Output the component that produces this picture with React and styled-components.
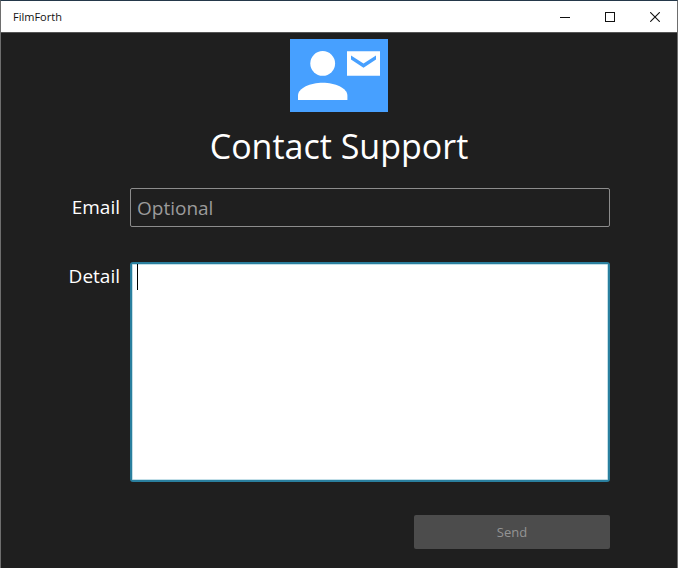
import React from "react";
import styled, { createGlobalStyle } from "styled-components";

const GlobalStyle = createGlobalStyle`
  *, *::before, *::after { box-sizing: border-box; }
  body {
    margin: 0;
    background: #1f1f1f;
    font-family: "Segoe UI", "Open Sans", "Noto Sans", sans-serif;
  }
`;

const Window = styled.div`
  display: flex;
  flex-direction: column;
  min-height: 100vh;
  border: 1px solid #6e6e6e;
  border-top-color: #24384a;
  border-bottom-width: 0;
  background: #1f1f1f;
  color: #fff;
`;

const TitleBar = styled.header`
  display: flex;
  align-items: center;
  justify-content: space-between;
  height: 32px;
  padding-left: 12px;
  border-bottom: 1px solid #555;
  background: #fff;
  color: #111;
`;

const AppName = styled.span`
  font-size: 11px;
  line-height: 16px;
`;

const WindowControls = styled.div`
  display: flex;
  align-self: stretch;
`;

const WindowButton = styled.button`
  display: flex;
  align-items: center;
  justify-content: center;
  width: 45px;
  padding: 0;
  border: 0;
  background: transparent;
  color: #111;
`;

const Form = styled.form`
  display: flex;
  flex: 1;
  flex-direction: column;
  padding: 6px 67px 19px 20px;
`;

const Heading = styled.div`
  display: flex;
  flex-direction: column;
  align-items: center;
  margin: 0 0 18px 47px;
`;

const SupportIcon = styled.svg`
  display: block;
  width: 98px;
  height: 73px;
`;

const Title = styled.h1`
  margin: 10px 0 0;
  font-size: 34px;
  font-weight: 400;
  line-height: 48px;
  white-space: nowrap;
`;

const Field = styled.div`
  display: grid;
  grid-template-columns: 99px minmax(0, 1fr);
  column-gap: 10px;
  flex: ${({ $grow }) => ($grow ? "1" : "none")};
  margin-bottom: ${({ $grow }) => ($grow ? "33px" : "35px")};
`;

const Label = styled.label`
  padding-top: ${({ $top }) => $top}px;
  font-size: 19px;
  font-weight: 500;
  line-height: 26px;
  text-align: right;
`;

const EmailInput = styled.input`
  width: 100%;
  height: 39px;
  padding: 0 6px;
  border: 1px solid #8c8c8c;
  border-radius: 2px;
  outline: none;
  background: transparent;
  color: #fff;
  font: inherit;
  font-size: 19px;

  &::placeholder {
    color: #9b9b9b;
    opacity: 1;
  }
`;

const DetailBox = styled.div`
  position: relative;
  display: flex;
`;

const DetailInput = styled.textarea`
  flex: 1;
  min-width: 0;
  min-height: 100px;
  padding: 0 5px;
  border: 2px solid #2a7f9e;
  border-radius: 3px;
  outline: none;
  resize: none;
  background: #fff;
  box-shadow: inset 0 0 0 1px #c3dfe8;
  color: #000;
  caret-color: ${({ $empty }) => ($empty ? "transparent" : "#000")};
  font: inherit;
  font-size: 19px;
  line-height: 26px;
`;

const Caret = styled.span`
  position: absolute;
  top: 2px;
  left: 7px;
  width: 1px;
  height: 26px;
  background: #000;
  pointer-events: none;
`;

const SendButton = styled.button`
  align-self: flex-end;
  width: 196px;
  max-width: 100%;
  height: 34px;
  padding: 0;
  border: 0;
  border-radius: 2px;
  background: #4c4c4c;
  color: #949494;
  font: inherit;
  font-size: 13px;
`;

export default function App() {
  const [detail, setDetail] = React.useState("");

  return (
    <>
      <GlobalStyle />
      <Window>
        <TitleBar>
          <AppName>FilmForth</AppName>
          <WindowControls>
            <WindowButton type="button" aria-label="Minimize">
              <svg width="10" height="10" viewBox="0 0 10 10" shapeRendering="crispEdges">
                <path d="M0 5.5H10" stroke="currentColor" />
              </svg>
            </WindowButton>
            <WindowButton type="button" aria-label="Maximize">
              <svg width="10" height="10" viewBox="0 0 10 10" shapeRendering="crispEdges">
                <path d="M.5.5h9v9h-9z" fill="none" stroke="currentColor" />
              </svg>
            </WindowButton>
            <WindowButton type="button" aria-label="Close">
              <svg width="10" height="10" viewBox="0 0 10 10">
                <path d="M.2.2l9.6 9.6M9.8.2L.2 9.8" stroke="currentColor" strokeWidth="1.1" />
              </svg>
            </WindowButton>
          </WindowControls>
        </TitleBar>
        <Form onSubmit={(event) => event.preventDefault()}>
          <Heading>
            <SupportIcon viewBox="0 0 98 73" aria-hidden="true">
              <path fill="#47a0ff" d="M0 0h98v73H0z" />
              <circle cx="32.7" cy="24.4" r="12.4" fill="#fff" />
              <path fill="#fff" d="M8 61v-4.500C8 49 20.500 43.700 32.700 43.700s24.700 5.300 24.700 12.800V61z" />
              <path fill="#fff" d="M57 12.2h33v24.6H57z" />
              <path fill="#47a0ff" d="M61 16.5l12.5 8 12.5-8v4L73.5 28.7 61 20.5z" />
            </SupportIcon>
            <Title>Contact Support</Title>
          </Heading>
          <Field>
            <Label htmlFor="email" $top={6}>Email</Label>
            <EmailInput id="email" type="email" placeholder="Optional" />
          </Field>
          <Field $grow>
            <Label htmlFor="detail" $top={1}>Detail</Label>
            <DetailBox>
              <DetailInput
                id="detail"
                value={detail}
                $empty={detail === ""}
                onChange={(event) => setDetail(event.target.value)}
              />
              {detail === "" && <Caret />}
            </DetailBox>
          </Field>
          <SendButton type="submit" disabled={detail === ""}>Send</SendButton>
        </Form>
      </Window>
    </>
  );
}
